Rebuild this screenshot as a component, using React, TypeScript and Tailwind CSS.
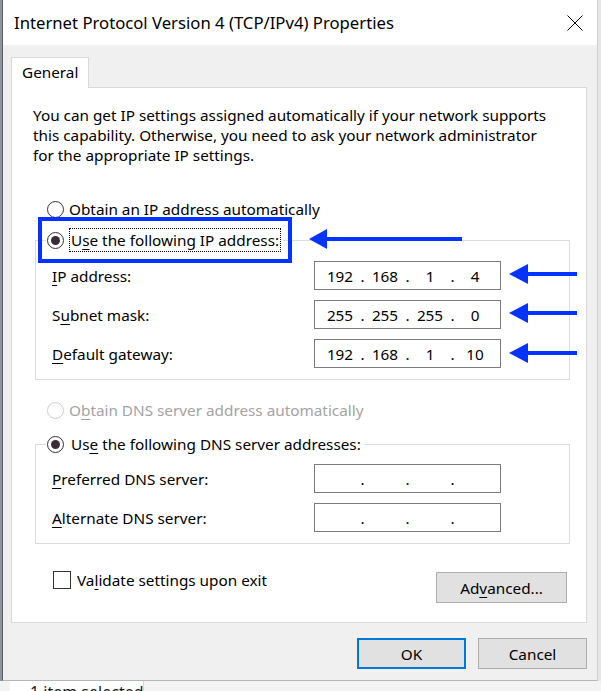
import React from "react";

function Radio({ checked, disabled }: { checked?: boolean; disabled?: boolean }) {
  return (
    <span
      className={
        "flex h-[17px] w-[17px] shrink-0 items-center justify-center rounded-full border bg-white " +
        (disabled ? "border-[#cccccc]" : "border-[#333333]")
      }
    >
      {checked && <span className="h-[9px] w-[9px] rounded-full bg-[#3a2d38]" />}
    </span>
  );
}

function IpBox({ parts }: { parts: string[] }) {
  return (
    <div className="flex h-[29px] w-[187px] items-center border border-[#7a7a7a] bg-white pl-[6px] text-black">
      {parts.map((p, i) => (
        <React.Fragment key={i}>
          {i > 0 && <span className="w-[7px] text-center">.</span>}
          <span className="w-[38px] text-center">{p}</span>
        </React.Fragment>
      ))}
    </div>
  );
}

function Row({ label, parts }: { label: React.ReactNode; parts: string[] }) {
  return (
    <div className="flex items-center">
      <span className="w-[262px]">{label}</span>
      <IpBox parts={parts} />
    </div>
  );
}

const U = ({ children }: { children: React.ReactNode }) => (
  <span className="underline decoration-1 underline-offset-[3px]">{children}</span>
);

export default function App() {
  return (
    <div className="relative h-[691px] w-[601px] overflow-hidden bg-[#ececec] font-['Noto_Sans',sans-serif] text-[15.3px] leading-[20px] text-black">
      <div className="flex h-[681px]">
        <div className="w-[2px] bg-[#8e959c]" />
        <div className="flex w-[596px] flex-col border-l border-r border-b border-l-[#5f5f5f] border-r-[#cfcfcf] border-b-[#b5b5b5] bg-[#f0f0f0]">
          {/* Title bar */}
          <div className="flex h-[45px] shrink-0 items-center justify-between bg-white pl-[11px] pr-[14px]">
            <span className="text-[16.7px] text-black">Internet Protocol Version 4 (TCP/IPv4) Properties</span>
            <svg width="16" height="16" viewBox="0 0 16 16" className="mt-[1px]">
              <path d="M0.5 0.5 L15.5 15.5 M15.5 0.5 L0.5 15.5" stroke="#000" strokeWidth="1" fill="none" />
            </svg>
          </div>

          {/* Body */}
          <div className="flex flex-1 flex-col pl-[8px] pr-[10px] pt-[12px]">
            <div className="relative z-10 -mb-px flex h-[31px] w-[78px] items-start border border-b-0 border-[#d9d9d9] bg-white pl-[10px] pt-[4px]">
              General
            </div>
            <div className="flex h-[536px] w-[576px] flex-col border border-[#d9d9d9] bg-white pl-[21px] pt-[17px]">
              <p>
                You can get IP settings assigned automatically if your network supports
                <br />
                this capability. Otherwise, you need to ask your network administrator
                <br />
                for the appropriate IP settings.
              </p>

              <div className="ml-[14px] mt-[34px] flex h-[20px] items-center">
                <Radio />
                <span className="ml-[5px]">
                  <U>O</U>btain an IP address automatically
                </span>
              </div>

              <fieldset className="ml-[2px] mt-[9px] w-[535px] border border-[#dcdcdc]">
                <legend className="ml-[10px] flex h-[24px] items-center pl-[1px] pr-[2px]">
                  <Radio checked />
                  <span className="ml-[5px] border border-dotted border-black px-[1px] leading-[22px]">
                    U<U>s</U>e the following IP address:
                  </span>
                </legend>
                <div className="flex flex-col gap-[10px] pb-[11px] pl-[16px] pt-[9px]">
                  <Row label={<><U>I</U>P address:</>} parts={["192", "168", "1", "4"]} />
                  <Row label={<>S<U>u</U>bnet mask:</>} parts={["255", "255", "255", "0"]} />
                  <Row label={<><U>D</U>efault gateway:</>} parts={["192", "168", "1", "10"]} />
                </div>
              </fieldset>

              <div className="ml-[14px] mt-[20px] flex h-[20px] items-center text-[#a3a3a3]">
                <Radio disabled />
                <span className="ml-[5px]">
                  O<U>b</U>tain DNS server address automatically
                </span>
              </div>

              <fieldset className="ml-[2px] mt-[12px] w-[535px] border border-[#dcdcdc]">
                <legend className="ml-[10px] flex h-[24px] items-center pl-[1px] pr-[2px]">
                  <Radio checked />
                  <span className="ml-[5px] border border-transparent px-[1px] leading-[22px]">
                    Us<U>e</U> the following DNS server addresses:
                  </span>
                </legend>
                <div className="flex flex-col gap-[10px] pb-[11px] pl-[16px] pt-[8px]">
                  <Row label={<><U>P</U>referred DNS server:</>} parts={["", "", "", ""]} />
                  <Row label={<><U>A</U>lternate DNS server:</>} parts={["", "", "", ""]} />
                </div>
              </fieldset>

              <div className="mt-[26px] flex items-start justify-between pr-[19px]">
                <div className="ml-[20px] flex h-[20px] items-center">
                  <span className="h-[18px] w-[18px] border border-[#333333] bg-white" />
                  <span className="ml-[6px]">
                    Va<U>l</U>idate settings upon exit
                  </span>
                </div>
                <button className="mt-[2px] flex h-[31px] w-[131px] items-center justify-center border border-[#adadad] bg-[#e1e1e1]">
                  Ad<U>v</U>anced...
                </button>
              </div>
            </div>

            <div className="mt-[15px] flex justify-end gap-[12px]">
              <button className="flex h-[31px] w-[109px] items-center justify-center border-2 border-[#0078d7] bg-[#e1e1e1]">
                OK
              </button>
              <button className="flex h-[31px] w-[109px] items-center justify-center border border-[#adadad] bg-[#e1e1e1]">
                Cancel
              </button>
            </div>
          </div>
        </div>
        <div className="w-[3px] bg-[#e6e6e6]" />
      </div>

      {/* Background window strip below dialog */}
      <div className="flex h-[10px] bg-[#f3f3f3]">
        <div className="ml-[10px] w-[134px] overflow-hidden whitespace-nowrap border-r border-[#dadada] bg-white pl-[20px] pt-[1px] text-[16px] leading-[20px] text-[#1a1a1a]">
          1 item selected
        </div>
      </div>

      {/* Annotations */}
      <div className="pointer-events-none absolute left-[38px] top-[217px] h-[46px] w-[254px] border-[4px] border-[#0433ff]" />
      <svg className="pointer-events-none absolute left-0 top-0" width="601" height="691">
        <g fill="#0433ff">
          <rect x="325" y="237" width="137" height="4" />
          <polygon points="309,239 327,229 327,249" />
          <rect x="526" y="272" width="51" height="4" />
          <polygon points="509,274 528,264 528,284" />
          <rect x="526" y="311" width="51" height="4" />
          <polygon points="509,313 528,303 528,323" />
          <rect x="526" y="351" width="51" height="4" />
          <polygon points="509,353 528,343 528,363" />
        </g>
      </svg>
    </div>
  );
}
